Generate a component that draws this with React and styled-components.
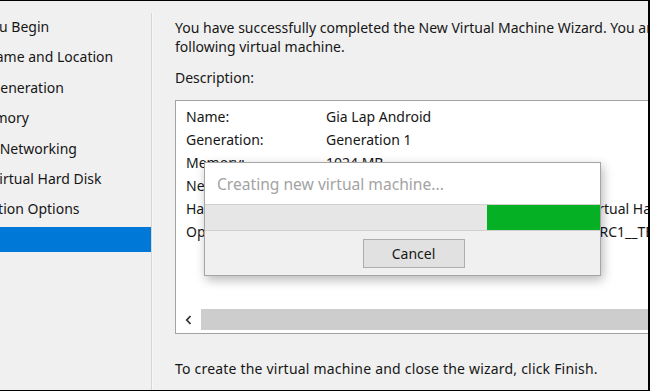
import React from 'react';
import styled, { createGlobalStyle } from 'styled-components';

const GlobalStyle = createGlobalStyle`
  html, body {
    margin: 0;
    padding: 0;
    background: #f0f0f0;
    overflow: hidden;
  }
  body {
    font-family: "Noto Sans", "Liberation Sans", sans-serif;
    color: #161616;
  }
`

const Frame = styled.div`
  position: relative;
  width: 650px;
  height: 391px;
  box-sizing: border-box;
  border-top: 1px solid #000;
  border-right: 2px solid #000;
  border-bottom: 1px solid #000;
  background: #f0f0f0;
  display: flex;
  overflow: hidden;
  font-size: 14px;
`

const Sidebar = styled.nav`
  width: 151px;
  flex-shrink: 0;
  display: flex;
  flex-direction: column;
  gap: 5.4px;
  padding-top: 13px;
`

const NavItem = styled.div`
  height: 25px;
  display: flex;
  align-items: center;
  white-space: nowrap;
  overflow: hidden;
  background: ${p => (p.$active ? '#0078d7' : 'transparent')};
  color: ${p => (p.$active ? '#fff' : '#161616')};

  span {
    margin-left: ${p => p.$clip}px;
  }
`

const Divider = styled.div`
  width: 1px;
  flex-shrink: 0;
  margin-top: 12px;
  background: #d5d5d5;
  box-shadow: 1px 0 0 #f7f7f7;
`

const Content = styled.main`
  width: 680px;
  flex-shrink: 0;
  padding: 17px 0 0 23px;
  box-sizing: border-box;
  line-height: 19px;
`

const Intro = styled.p`
  margin: 0;
  white-space: nowrap;
`

const Label = styled.p`
  margin: 12px 0 0;
`

const SummaryBox = styled.div`
  margin-top: 13px;
  height: 234px;
  box-sizing: border-box;
  border: 1px solid #a3a3a3;
  background: #fff;
  display: flex;
  flex-direction: column;
`

const Rows = styled.div`
  flex: 1;
  padding: 4px 0 0 10px;
`

const Row = styled.div`
  display: grid;
  grid-template-columns: 140px auto;
  line-height: 23px;
  white-space: nowrap;
`

const ScrollBar = styled.div`
  height: 21px;
  margin-bottom: 3px;
  display: flex;
`

const ArrowButton = styled.div`
  width: 25px;
  display: flex;
  align-items: center;
  justify-content: center;
  background: #fff;
`

const Track = styled.div`
  flex: 1;
  background: #cdcdcd;
`

const Footer = styled.p`
  margin: 25px 0 0;
  letter-spacing: 0.2px;
`

const Dialog = styled.div`
  position: absolute;
  left: 204px;
  top: 161px;
  width: 397px;
  height: 114px;
  box-sizing: border-box;
  border: 1px solid #a5a5a5;
  background: #f0f0f0;
  box-shadow: 2px 4px 10px rgba(0, 0, 0, 0.28);
  display: flex;
  flex-direction: column;
`

const DialogTitle = styled.div`
  height: 41px;
  background: #fff;
  display: flex;
  align-items: center;
  padding-left: 12px;
  font-size: 15.6px;
  color: #a3a3a3;
`

const Progress = styled.div`
  height: 27px;
  box-sizing: border-box;
  background: #e6e6e6;
  border-top: 1px solid #d0d0d0;
  border-bottom: 1px solid #d0d0d0;
  display: flex;
`

const Marquee = styled.div`
  margin-left: ${p => p.$offset}px;
  width: ${p => p.$size}px;
  background: #06b025;
`

const DialogFooter = styled.div`
  flex: 1;
  display: flex;
  align-items: center;
  justify-content: center;
  padding-left: 22px;
`

const CancelButton = styled.button`
  width: 102px;
  height: 29px;
  border: 1px solid #adadad;
  background: #e1e1e1;
  font-family: inherit;
  font-size: 14px;
  color: #161616;
  padding: 0;
`

const steps = [
  ['Before You Begin', -64],
  ['Specify Name and Location', -65],
  ['Specify Generation', -60],
  ['Assign Memory', -73],
  ['Configure Networking', -69],
  ['Connect Virtual Hard Disk', -67],
  ['Installation Options', -50],
  ['Summary', -64],
]

const summary = [
  ['Name:', 'Gia Lap Android'],
  ['Generation:', 'Generation 1'],
  ['Memory:', '1024 MB'],
  ['Network:', 'Not Connected'],
  ['Hard Disk:', 'C:\\Users\\Admin\\Documents\\Hyper-V\\1\\Virtual Hard Disks\\Gia Lap Android.vhdx'],
  ['Operating System:', 'Will install from D:\\android-x86_64-9.0-r2-RC1__TEST.iso'],
]

export default function App() {
  return (
    <Frame>
      <GlobalStyle />
      <Sidebar>
        {steps.map(([step, clip], key) =>
          <NavItem key={key} $clip={clip} $active={key === steps.length - 1}>
            <span>{step}</span>
          </NavItem>
        )}
      </Sidebar>
      <Divider />
      <Content>
        <Intro>
          You have successfully completed the New Virtual Machine Wizard. You are about to create the<br />
          following virtual machine.
        </Intro>
        <Label>Description:</Label>
        <SummaryBox>
          <Rows>
            {summary.map(([name, value], key) =>
              <Row key={key}>
                <span>{name}</span>
                <span>{value}</span>
              </Row>
            )}
          </Rows>
          <ScrollBar>
            <ArrowButton>
              <svg width="7" height="10" viewBox="0 0 7 10">
                <path d="M5.5 1 L1.8 5 L5.5 9" fill="none" stroke="#333" strokeWidth="1.8" />
              </svg>
            </ArrowButton>
            <Track />
          </ScrollBar>
        </SummaryBox>
        <Footer>To create the virtual machine and close the wizard, click Finish.</Footer>
      </Content>

      <Dialog>
        <DialogTitle>Creating new virtual machine...</DialogTitle>
        <Progress>
          <Marquee $offset={282} $size={113} />
        </Progress>
        <DialogFooter>
          <CancelButton>Cancel</CancelButton>
        </DialogFooter>
      </Dialog>
    </Frame>
  )
}
